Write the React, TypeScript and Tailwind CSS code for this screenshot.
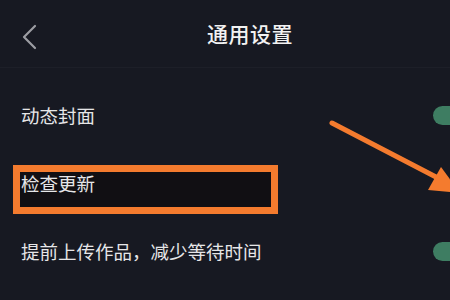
import React from "react";

const rows = [
  { label: "动态封面", toggle: true },
  { label: "检查更新", toggle: false },
  { label: "提前上传作品，减少等待时间", toggle: true },
];

function Toggle() {
  return <div className="h-[19px] w-[50px] rounded-full bg-[#3e7d62]" />;
}

export default function App() {
  return (
    <div
      className="relative h-[300px] w-[450px] overflow-hidden bg-[#171922]"
      style={{ fontFamily: '"Noto Sans CJK SC", "Noto Sans", sans-serif' }}
    >
      <div className="w-[500px]">
        {/* Header */}
        <div className="relative flex h-[68px] items-center justify-center border-b border-[#1d1f28]">
          <svg
            className="absolute left-[20px] top-[24px]"
            width="20"
            height="28"
            viewBox="0 0 20 28"
            fill="none"
          >
            <path
              d="M15 2 L4 13 L15 24"
              stroke="#9c9da3"
              strokeWidth="2.2"
              strokeLinecap="round"
              strokeLinejoin="round"
            />
          </svg>
          <span className="text-[21px] font-medium leading-none tracking-[0.5px] text-[#f2f2f2]">
            通用设置
          </span>
        </div>

        {/* Rows */}
        <div className="mt-[13px] flex flex-col">
          {rows.map((row) => (
            <div
              key={row.label}
              className="flex h-[68px] items-center justify-between pl-[21px] pr-[17px]"
            >
              <span className="text-[18.5px] leading-none text-[#e6e6e8]">{row.label}</span>
              {row.toggle && <Toggle />}
            </div>
          ))}
        </div>
      </div>

      {/* Annotation: orange box */}
      <div className="absolute left-[13px] top-[165px] flex h-[49px] w-[265px] items-start border-[7px] border-[#f47b2e] bg-[#110f13] pl-[1px] pt-[2px]">
        <span className="text-[18.5px] leading-none text-[#e6e6e8]">检查更新</span>
      </div>

      {/* Annotation: arrow */}
      <svg className="absolute left-0 top-0" width="450" height="300" viewBox="0 0 450 300">
        <line
          x1="332"
          y1="123"
          x2="436"
          y2="177"
          stroke="#f47b2e"
          strokeWidth="5"
          strokeLinecap="round"
        />
        <polygon points="441,167 428,190 460,193" fill="#f47b2e" />
      </svg>
    </div>
  );
}
